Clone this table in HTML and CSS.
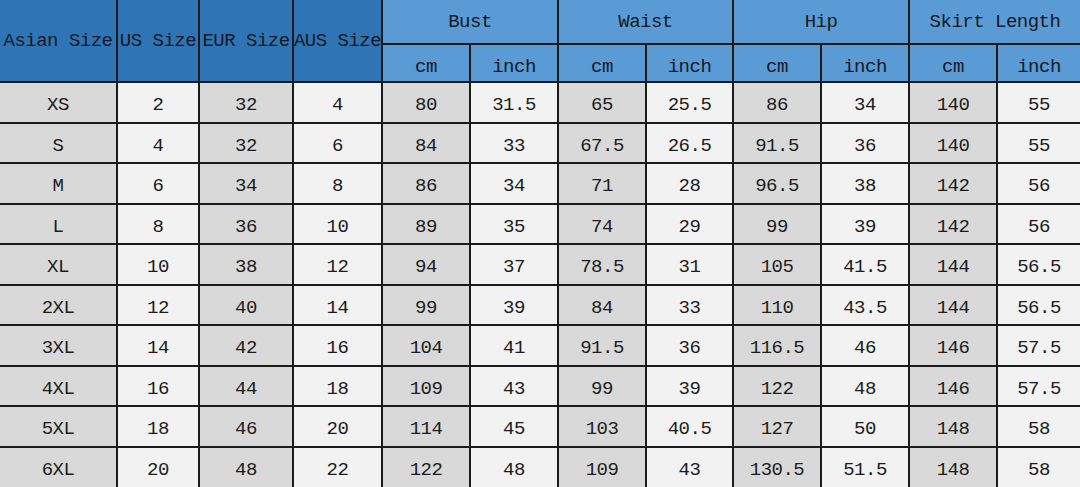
FILE: index.html
```html
<!DOCTYPE html>
<html>
<head>
<meta charset="utf-8">
<link rel="stylesheet" href="styles.css">
</head>
<body>
<div class="chart">
  <div class="h dark span2">Asian Size</div>
  <div class="h dark span2">US Size</div>
  <div class="h dark span2">EUR Size</div>
  <div class="h dark span2">AUS Size</div>
  <div class="h light group">Bust</div>
  <div class="h light group">Waist</div>
  <div class="h light group">Hip</div>
  <div class="h light group">Skirt Length</div>
  <div class="h light sub">cm</div><div class="h light sub">inch</div>
  <div class="h light sub">cm</div><div class="h light sub">inch</div>
  <div class="h light sub">cm</div><div class="h light sub">inch</div>
  <div class="h light sub">cm</div><div class="h light sub">inch</div>

  <div class="c g">XS</div><div class="c w">2</div><div class="c g">32</div><div class="c w">4</div><div class="c g">80</div><div class="c w">31.5</div><div class="c g">65</div><div class="c w">25.5</div><div class="c g">86</div><div class="c w">34</div><div class="c g">140</div><div class="c w">55</div>
  <div class="c g">S</div><div class="c w">4</div><div class="c g">32</div><div class="c w">6</div><div class="c g">84</div><div class="c w">33</div><div class="c g">67.5</div><div class="c w">26.5</div><div class="c g">91.5</div><div class="c w">36</div><div class="c g">140</div><div class="c w">55</div>
  <div class="c g">M</div><div class="c w">6</div><div class="c g">34</div><div class="c w">8</div><div class="c g">86</div><div class="c w">34</div><div class="c g">71</div><div class="c w">28</div><div class="c g">96.5</div><div class="c w">38</div><div class="c g">142</div><div class="c w">56</div>
  <div class="c g">L</div><div class="c w">8</div><div class="c g">36</div><div class="c w">10</div><div class="c g">89</div><div class="c w">35</div><div class="c g">74</div><div class="c w">29</div><div class="c g">99</div><div class="c w">39</div><div class="c g">142</div><div class="c w">56</div>
  <div class="c g">XL</div><div class="c w">10</div><div class="c g">38</div><div class="c w">12</div><div class="c g">94</div><div class="c w">37</div><div class="c g">78.5</div><div class="c w">31</div><div class="c g">105</div><div class="c w">41.5</div><div class="c g">144</div><div class="c w">56.5</div>
  <div class="c g">2XL</div><div class="c w">12</div><div class="c g">40</div><div class="c w">14</div><div class="c g">99</div><div class="c w">39</div><div class="c g">84</div><div class="c w">33</div><div class="c g">110</div><div class="c w">43.5</div><div class="c g">144</div><div class="c w">56.5</div>
  <div class="c g">3XL</div><div class="c w">14</div><div class="c g">42</div><div class="c w">16</div><div class="c g">104</div><div class="c w">41</div><div class="c g">91.5</div><div class="c w">36</div><div class="c g">116.5</div><div class="c w">46</div><div class="c g">146</div><div class="c w">57.5</div>
  <div class="c g">4XL</div><div class="c w">16</div><div class="c g">44</div><div class="c w">18</div><div class="c g">109</div><div class="c w">43</div><div class="c g">99</div><div class="c w">39</div><div class="c g">122</div><div class="c w">48</div><div class="c g">146</div><div class="c w">57.5</div>
  <div class="c g">5XL</div><div class="c w">18</div><div class="c g">46</div><div class="c w">20</div><div class="c g">114</div><div class="c w">45</div><div class="c g">103</div><div class="c w">40.5</div><div class="c g">127</div><div class="c w">50</div><div class="c g">148</div><div class="c w">58</div>
  <div class="c g">6XL</div><div class="c w">20</div><div class="c g">48</div><div class="c w">22</div><div class="c g">122</div><div class="c w">48</div><div class="c g">109</div><div class="c w">43</div><div class="c g">130.5</div><div class="c w">51.5</div><div class="c g">148</div><div class="c w">58</div>
</div>
</body>
</html>
```

FILE: styles.css
```css
html, body {
  margin: 0;
  padding: 0;
  background: #ffffff;
  overflow: hidden;
}

.chart {
  display: grid;
  width: 1080px;
  height: 487px;
  grid-template-columns: 116px 80px 92px 87px 86px 86px 86px 85px 86px 86px 86px 82px;
  grid-template-rows: 43px 36px repeat(9, 38.5px) 39.5px;
  gap: 2px;
  background: #1b1b1b;
  font-family: "Liberation Mono", "DejaVu Sans Mono", monospace;
  font-size: 19px;
  letter-spacing: -0.5px;
  color: #1c1c1c;
}

.h, .c {
  display: flex;
  align-items: center;
  justify-content: center;
  white-space: nowrap;
  overflow: hidden;
  box-sizing: border-box;
}

.h {
  color: #0f1a26;
  padding-top: 1px;
}

.sub {
  padding-top: 8px;
}

.c {
  padding-top: 6px;
}

.dark {
  background: #2f75b6;
}

.light {
  background: #5b9bd5;
}

.span2 {
  grid-row: span 2;
}

.group {
  grid-column: span 2;
}

.g {
  background: #d9d9d9;
}

.w {
  background: #f2f2f2;
}
```
